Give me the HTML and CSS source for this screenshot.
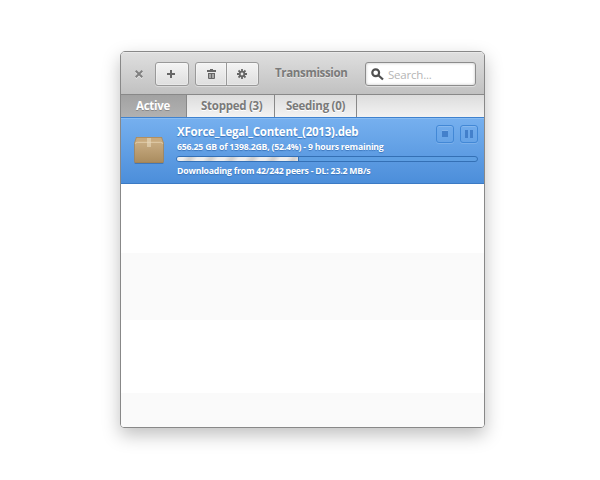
FILE: index.html
```html
<!DOCTYPE html>
<html lang="en">
<head>
<meta charset="utf-8">
<title>Transmission</title>
<link rel="stylesheet" href="styles.css">
</head>
<body>
<main class="window">
  <header class="toolbar">
    <svg class="close" width="8" height="8" viewBox="0 0 8 8"><path d="M.7 .7l6.600 6.600M7.300 .7L.7 7.300"/></svg>
    <button class="btn add" aria-label="Add"><svg width="8" height="8" viewBox="0 0 8 8"><path d="M3 0h2v3h3v2H5v3H3V5H0V3h3z"/></svg></button>
    <div class="group">
      <button class="btn" aria-label="Remove"><svg width="9" height="10" viewBox="0 0 9 10"><path fill-rule="evenodd" d="M3 0h3v1h3v2H0V1h3zM1 4h7v5q0 1-1 1H2q-1 0-1-1zM2.500 5v4h1V5zM5.500 5v4h1V5z"/></svg></button>
      <button class="btn" aria-label="Settings"><svg width="10" height="10" viewBox="0 0 10 10"><path class="teeth" d="M5 0v3M5 7v3M0 5h3M7 5h3M1.500 1.500l2 2M6.500 6.500l2 2M8.500 1.500l-2 2M3.500 6.500l-2 2"/><circle class="ring" cx="5" cy="5" r="2.300"/></svg></button>
    </div>
    <h1 class="title">Transmission</h1>
    <label class="search">
      <svg width="14" height="13" viewBox="0 0 14 13"><circle cx="4.700" cy="4.700" r="3.400"/><path d="M7.300 7.200l4.700 4.300"/></svg>
      <span>Search...</span>
    </label>
  </header>
  <nav class="tabs">
    <div class="tab active"><span>Active</span></div>
    <div class="tab stopped"><span>Stopped (3)</span></div>
    <div class="tab seeding"><span>Seeding (0)</span></div>
  </nav>
  <section class="torrent">
    <svg class="box" width="32" height="30" viewBox="0 0 32 30">
      <defs>
        <linearGradient id="front" x2="0" y2="1"><stop stop-color="#cfb48b"/><stop offset="1" stop-color="#a98b5e"/></linearGradient>
      </defs>
      <rect x="1.500" y="26" width="29" height="2" rx="1" fill="#24538c" opacity=".45"/>
      <path d="M3.500 1h25l2 5.500v19.500q0 1-1 1h-27q-1 0-1-1V6.500z" fill="url(#front)"/>
      <path d="M3.500 1h25l1.500 5H2z" fill="#c8aa7e"/>
      <path d="M3.500 1.500h25" stroke="#b28f60"/>
      <path d="M1.500 7.500l3-1.200h23l3 1.200" fill="none" stroke="#e2cdab"/>
      <path d="M3.500 1L1.500 7v18.500q0 1 1 1h27q1 0 1-1V7l-2-6" fill="none" stroke="#a17f51" stroke-width=".7"/>
      <path d="M14 2h4v9h-4z" fill="#e8d8bd" opacity=".6"/>
    </svg>
    <div class="info">
      <div class="head">
        <div>
          <h2><span>XForce_Legal_Content_(2013).deb</span></h2>
          <p class="size"><span>656.25 GB of 1398.2GB, (52.4%) - 9 hours remaining</span></p>
        </div>
        <div class="actions">
          <button aria-label="Stop"><i class="stop"></i></button>
          <button aria-label="Pause"><i class="pause"></i></button>
        </div>
      </div>
      <div class="progress"><div class="fill"></div></div>
      <p class="peers"><span>Downloading from 42/242 peers - DL: 23.2 MB/s</span></p>
    </div>
  </section>
  <div class="rows"></div>
</main>
</body>
</html>
```
FILE: styles.css
```css
* { box-sizing: border-box; }
body {
  margin: 0;
  min-height: 480px;
  padding: 51px 0 0 120px;
  background: #fff;
  font: bold 11.5px/16px "Open Sans", "Noto Sans", sans-serif;
  color: #7a7a7a;
}
h1, h2, p { margin: 0; font-size: inherit; white-space: nowrap; }
svg { display: block; flex: none; }
button { margin: 0; padding: 0; font: inherit; }
.window {
  width: 365px;
  height: 377px;
  display: flex;
  flex-direction: column;
  border: 1px solid #888;
  border-radius: 5px 5px 4px 4px;
  overflow: hidden;
  box-shadow: 0 7px 18px rgba(0, 0, 0, .25);
}
.toolbar {
  height: 43px;
  display: flex;
  align-items: flex-start;
  padding: 10px 8px 0 14px;
  background: linear-gradient(#dfdfdf, #c1c1c1);
  border-bottom: 1px solid #888;
  box-shadow: inset 0 1px #e9e9e9;
}
.close { margin: 8px 12px 0 0; fill: none; stroke: #808080; stroke-width: 2; filter: drop-shadow(0 1px 0 #e8e8e8); }
.btn {
  width: 32px;
  height: 24px;
  display: flex;
  align-items: center;
  justify-content: center;
  border: 1px solid #999;
  border-radius: 3px;
  background: linear-gradient(#f4f4f4, #dedede);
  box-shadow: inset 0 0 0 1px rgba(255, 255, 255, .3), 0 1px rgba(255, 255, 255, .35);
}
.btn svg { fill: #666; }
.add { width: 34px; padding-right: 2px; }
.group { display: flex; margin-left: 6px; }
.group .btn:first-child { border-radius: 3px 0 0 3px; }
.group .btn:last-child { width: 33px; padding-right: 2px; margin-left: -1px; border-radius: 0 3px 3px 0; }
.teeth { stroke: #666; stroke-width: 1.8; }
.ring { fill: none; stroke: #666; stroke-width: 1.8; }
.title { width: 73px; margin: 3px 0 0 16px; text-shadow: 0 1px #e6e6e6; letter-spacing: -.33px; }
.search {
  width: 111px;
  height: 24px;
  margin-left: auto;
  display: flex;
  align-items: center;
  gap: 3px;
  padding-left: 5px;
  border: 1px solid #8c8c8c;
  border-radius: 3px;
  background: #fff;
  color: #b5b5b5;
  font-weight: 400;
  letter-spacing: -.2px;
  box-shadow: inset 0 0 3px rgba(0, 0, 0, .25), 0 1px rgba(255, 255, 255, .4);
}
.search span { padding-top: 2px; }
.search svg { fill: none; stroke: #505050; stroke-width: 2.2; }
.tabs {
  height: 22px;
  display: flex;
  background: linear-gradient(#dcdcdc, #f3f3f3);
}
.tab { border-right: 1px solid #888; line-height: 22px; white-space: nowrap; text-shadow: 0 1px #fff; letter-spacing: -.27px; }
.active { width: 66px; padding-left: 15px; color: #fff; background: linear-gradient(#a2a2a2, #b1b1b1); text-shadow: 0 1px #888; }
.stopped { width: 88px; padding-left: 14px; }
.seeding { width: 82px; padding-left: 11px; }
.torrent {
  height: 67px;
  display: flex;
  padding: 6px 6px 0 12px;
  color: #fff;
  background: linear-gradient(#76b0ef, #4c8eda);
  border-top: 1px solid #3f82cf;
  border-bottom: 1px solid #3b7ac4;
  box-shadow: inset 0 1px #8abdf2;
  text-shadow: 0 1px 1px #3a74ba;
}
.box { margin: 12px 12px 0 0; }
.info { width: 302px; margin-left: -1px; }
.head { display: flex; justify-content: space-between; height: 32px; }
h2, .info p { padding-left: 1px; }
h2 { line-height: 16px; letter-spacing: -.23px; }
.size, .peers { font-size: 8.7px; line-height: 12px; letter-spacing: -.2px; }
.size { padding-top: 1px; }
.actions { display: flex; gap: 6px; padding-top: 1px; }
.actions button {
  width: 18px;
  height: 18px;
  display: flex;
  align-items: center;
  justify-content: center;
  border: 1px solid #4288d6;
  border-radius: 3px;
  background: none;
  box-shadow: inset 0 1px rgba(255, 255, 255, .15), 0 1px rgba(255, 255, 255, .15);
}
.stop { width: 6px; height: 6px; background: #4380cb; box-shadow: 0 -1px #82b4ec; }
.pause { width: 8px; height: 8px; border: solid #4380cb; border-width: 0 3px; }
.progress {
  height: 6px;
  border: 1px solid #3470b5;
  border-radius: 3px;
  overflow: hidden;
  background: #5e9fe3;
}
.fill {
  width: 122px;
  height: 4px;
  border-right: 1px solid #3470b5;
  background: repeating-linear-gradient(120deg, #eee 0 6px, #d2d2d2 11px 13px, #eee 18px);
}
.peers { margin-top: 3px; }
.rows {
  flex: 1;
  background: linear-gradient(#fff 69px, #fafafa 69px 136px, #fff 136px 209px, #fafafa 209px);
}
```
